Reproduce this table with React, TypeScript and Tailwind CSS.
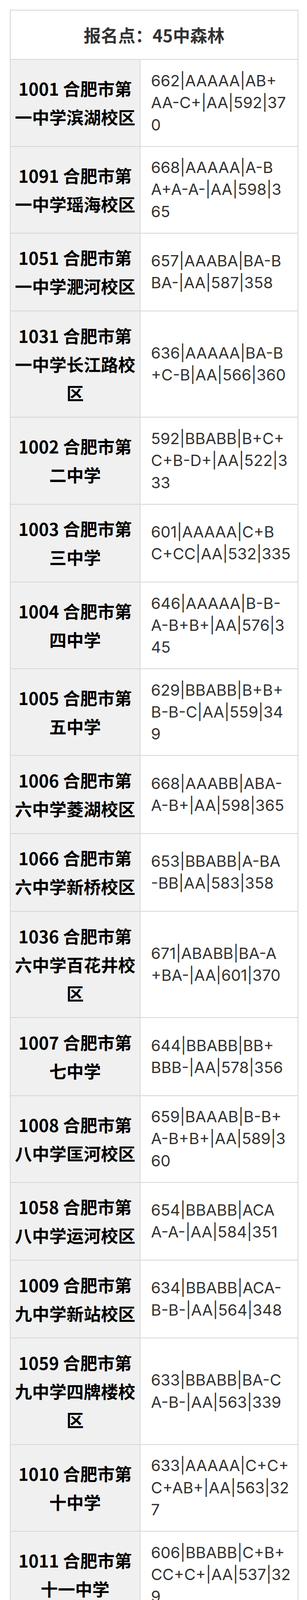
const rows: [string[], string[]][] = [
  [["1001 合肥市第", "一中学滨湖校区"], ["662|AAAAA|AB+", "AA-C+|AA|592|37", "0"]],
  [["1091 合肥市第", "一中学瑶海校区"], ["668|AAAAA|A-B", "A+A-A-|AA|598|3", "65"]],
  [["1051 合肥市第", "一中学淝河校区"], ["657|AAABA|BA-B", "BA-|AA|587|358"]],
  [["1031 合肥市第", "一中学长江路校", "区"], ["636|AAAAA|BA-B", "+C-B|AA|566|360"]],
  [["1002 合肥市第", "二中学"], ["592|BBABB|B+C+", "C+B-D+|AA|522|3", "33"]],
  [["1003 合肥市第", "三中学"], ["601|AAAAA|C+B", "C+CC|AA|532|335"]],
  [["1004 合肥市第", "四中学"], ["646|AAAAA|B-B-", "A-B+B+|AA|576|3", "45"]],
  [["1005 合肥市第", "五中学"], ["629|BBABB|B+B+", "B-B-C|AA|559|34", "9"]],
  [["1006 合肥市第", "六中学菱湖校区"], ["668|AAABB|ABA-", "A-B+|AA|598|365"]],
  [["1066 合肥市第", "六中学新桥校区"], ["653|BBABB|A-BA", "-BB|AA|583|358"]],
  [["1036 合肥市第", "六中学百花井校", "区"], ["671|ABABB|BA-A", "+BA-|AA|601|370"]],
  [["1007 合肥市第", "七中学"], ["644|BBABB|BB+", "BBB-|AA|578|356"]],
  [["1008 合肥市第", "八中学匡河校区"], ["659|BAAAB|B-B+", "A-B+B+|AA|589|3", "60"]],
  [["1058 合肥市第", "八中学运河校区"], ["654|BBABB|ACA", "A-A-|AA|584|351"]],
  [["1009 合肥市第", "九中学新站校区"], ["634|BBABB|ACA-", "B-B-|AA|564|348"]],
  [["1059 合肥市第", "九中学四牌楼校", "区"], ["633|BBABB|BA-C", "A-B-|AA|563|339"]],
  [["1010 合肥市第", "十中学"], ["633|AAAAA|C+C+", "C+AB+|AA|563|32", "7"]],
  [["1011 合肥市第", "十一中学"], ["606|BBABB|C+B+", "CC+C+|AA|537|32", "9"]],
  [["1032 合肥市第", "三十二中学"], ["614|AAAAA|CB+", "CA-C+|AA|544|31", "9"]],
  [["1040 合肥工业", "大学附属中学"], ["617|BBABB|BC+", "B-C+B-|AA|547|3", "34"]],
];

function Lines({ lines }: { lines: string[] }) {
  return (
    <>
      {lines.map((line, i) => (
        <span key={i} className="block whitespace-nowrap">
          {line}
        </span>
      ))}
    </>
  );
}

export default function App() {
  return (
    <div className="h-[4618px] overflow-hidden bg-white pt-[25px] pl-[25px]">
      <table className="w-[738px] table-fixed border-collapse">
        <colgroup>
          <col className="w-[332px]" />
          <col />
        </colgroup>
        <thead>
          <tr>
            <th
              colSpan={2}
              className="border-2 border-[#d6d6d6] py-[25.67px] text-center font-['Noto_Sans_CJK_SC',sans-serif] text-[44px] leading-[73px] font-bold text-[#333]"
            >
              报名点：45中森林
            </th>
          </tr>
        </thead>
        <tbody>
          {rows.map(([label, value]) => (
            <tr key={label[0]}>
              <td className="border-2 border-[#d6d6d6] bg-[#f0f0f0] py-[25.67px] text-center align-middle font-['Noto_Sans_CJK_SC',sans-serif] text-[44px] leading-[73px] font-bold text-black">
                <Lines lines={label} />
              </td>
              <td className="border-2 border-[#d6d6d6] bg-white py-[25.67px] pl-[27px] text-left align-middle font-['Inter','Noto_Sans_CJK_SC',sans-serif] text-[40px] leading-[56.3px] text-[#333]">
                <Lines lines={value} />
              </td>
            </tr>
          ))}
          {/* next row continues below the fold */}
          <tr>
            <td className="h-[199px] border-2 border-[#d6d6d6] bg-[#f0f0f0]" />
            <td className="h-[199px] border-2 border-[#d6d6d6] bg-white" />
          </tr>
        </tbody>
      </table>
    </div>
  );
}
